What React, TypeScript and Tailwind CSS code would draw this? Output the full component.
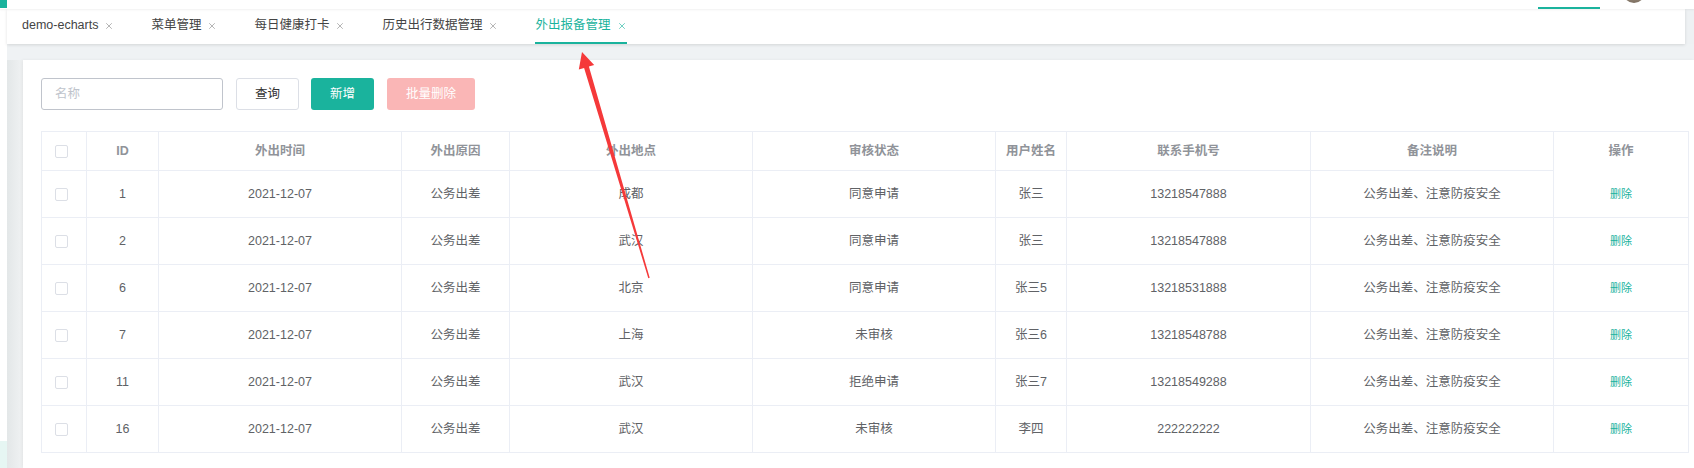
import { X } from 'lucide-react'

const TEAL = '#1ab39d'

const TABS = ['demo-echarts', '菜单管理', '每日健康打卡', '历史出行数据管理', '外出报备管理']

const HEADERS = ['ID', '外出时间', '外出原因', '外出地点', '审核状态', '用户姓名', '联系手机号', '备注说明']

const ROWS = [
  { id: 1, place: '成都', status: '同意申请', name: '张三', phone: '13218547888' },
  { id: 2, place: '武汉', status: '同意申请', name: '张三', phone: '13218547888' },
  { id: 6, place: '北京', status: '同意申请', name: '张三5', phone: '13218531888' },
  { id: 7, place: '上海', status: '未审核', name: '张三6', phone: '13218548788' },
  { id: 11, place: '武汉', status: '拒绝申请', name: '张三7', phone: '13218549288' },
  { id: 16, place: '武汉', status: '未审核', name: '李四', phone: '222222222' },
]

const cell = 'flex items-center justify-center border-r border-b border-[#ebeef5]'

function Checkbox() {
  return <span className="block w-[13px] h-[13px] rounded-[2px] border border-[#dcdfe6] bg-white" />
}

/**
 * Tab strip of opened pages
 */
function TabBar() {
  return (
    <div className="flex h-[35px]">
      <div className="relative z-[1] flex flex-1 gap-[37px] bg-white pl-[15px] shadow-[0_1px_3px_rgba(0,0,0,0.12)]">
        {TABS.map((t, i) => {
          const active = i === TABS.length - 1
          return (
            <div
              key={t}
              className={`flex h-full items-center gap-[6px] border-b-2 text-[12.5px] ${
                active ? 'border-[#1ab39d] text-[#1ab39d]' : 'border-transparent text-[#444]'
              }`}
            >
              <span>{t}</span>
              <X size={10} strokeWidth={1.5} className={active ? 'text-[#1ab39d]' : 'text-[#888]'} />
            </div>
          )
        })}
      </div>
      <div className="w-[9px] bg-[#eef1f3]" />
    </div>
  )
}

function Toolbar() {
  return (
    <div className="flex items-center text-[12.5px]">
      <div className="flex h-[32px] w-[182px] items-center rounded-[3px] border border-[#c0c4cc] pl-[13px] text-[#c0c4cc]">
        名称
      </div>
      <button className="ml-[13px] h-[32px] w-[63px] rounded-[3px] border border-[#dcdfe6] bg-white text-[#333]">
        查询
      </button>
      <button className="ml-[12px] h-[32px] w-[63px] rounded-[3px] bg-[#1ab39d] text-white">新增</button>
      <button className="ml-[13px] h-[32px] w-[88px] rounded-[3px] bg-[#fab6b6] text-white">批量删除</button>
    </div>
  )
}

function DataTable() {
  return (
    <div className="mt-[21px] grid w-fit grid-cols-[45px_72px_243px_108px_243px_243px_71px_244px_243px_135px] border-l border-t border-[#ebeef5] text-[12.5px]">
      {/* header */}
      <div className={`${cell} h-[39px] !justify-start pl-[13px]`}>
        <Checkbox />
      </div>
      {HEADERS.map((h) => (
        <div key={h} className={`${cell} h-[39px] font-bold text-[#909399]`}>
          {h}
        </div>
      ))}
      <div className="flex h-[39px] items-center justify-center border-r border-[#ebeef5] font-bold text-[#909399]">
        操作
      </div>

      {/* rows */}
      {ROWS.map((r) => (
        <div key={r.id} className="contents text-[#606266]">
          <div className={`${cell} h-[47px] !justify-start pl-[13px]`}>
            <Checkbox />
          </div>
          <div className={`${cell} h-[47px]`}>{r.id}</div>
          <div className={`${cell} h-[47px]`}>2021-12-07</div>
          <div className={`${cell} h-[47px]`}>公务出差</div>
          <div className={`${cell} h-[47px]`}>{r.place}</div>
          <div className={`${cell} h-[47px]`}>{r.status}</div>
          <div className={`${cell} h-[47px]`}>{r.name}</div>
          <div className={`${cell} h-[47px]`}>{r.phone}</div>
          <div className={`${cell} h-[47px]`}>公务出差、注意防疫安全</div>
          <div className={`${cell} h-[47px] text-[11px]`} style={{ color: TEAL }}>
            删除
          </div>
        </div>
      ))}
    </div>
  )
}

export default function App() {
  return (
    <div className="relative h-[468px] w-[1694px] overflow-hidden bg-white font-['Liberation_Sans','Noto_Sans_CJK_SC',sans-serif]">
      {/* cut-off header */}
      <div className="relative z-[2] flex h-[9px] items-start bg-white shadow-[0_1px_2px_rgba(0,0,0,0.06)]">
        <div className="h-[8px] w-[7px] bg-[#1ab39d]" />
        <div className="flex-1" />
        <div className="h-[2px] w-[62px] self-end bg-[#1ab39d]" />
        <div className="-mt-[19px] ml-[23px] mr-[49px] h-[22px] w-[22px] rounded-full bg-gradient-to-b from-[#d8cfc4] to-[#7d6f60]" />
      </div>

      <div className="flex h-[459px]">
        {/* sidebar edge */}
        <div className="flex w-[7px] flex-col">
          <div className="flex-1 bg-white" />
          <div className="h-[27px] bg-[#e6f6f3]" />
        </div>

        <div className="flex flex-1 flex-col bg-[#eff2f4]">
          <TabBar />
          <div className="flex flex-1 pt-[16px]">
            <div className="w-[16px] bg-gradient-to-r from-[#e3e7e8] to-[#f0f2f3]" />
            <div className="flex-1 bg-white pl-[18px] pt-[18px] shadow-[-1px_0_3px_rgba(0,0,0,0.06)]">
              <Toolbar />
              <DataTable />
            </div>
          </div>
        </div>
      </div>

      {/* red annotation arrow */}
      <svg className="pointer-events-none absolute left-0 top-0" width="1694" height="468">
        <polygon
          points="582,52 594.2,65 588.9,66.6 649.7,277.8 648.3,278.2 584.1,68 578.8,69.6"
          fill="#f5393a"
        />
      </svg>
    </div>
  )
}
